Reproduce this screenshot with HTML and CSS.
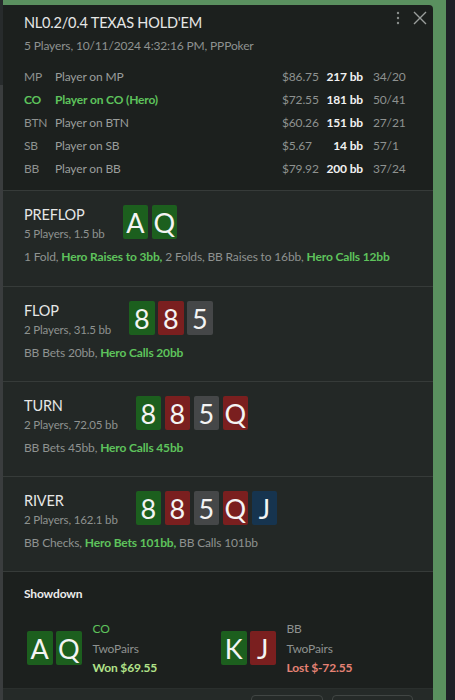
FILE: index.html
```html
<!DOCTYPE html>
<html>
<head>
<meta charset="utf-8">
<link rel="stylesheet" href="styles.css">
</head>
<body>
<div class="edge-left"></div>
<div class="stage">
  <div class="panel">
    <div class="header">
      <div class="title">NL0.2/0.4 TEXAS HOLD'EM</div>
      <div class="subtitle">5 Players, 10/11/2024 4:32:16 PM, PPPoker</div>
      <div class="tools">
        <svg class="dots" width="4" height="14" viewBox="0 0 4 14"><circle cx="2" cy="2" r="1.2"/><circle cx="2" cy="7" r="1.2"/><circle cx="2" cy="12" r="1.2"/></svg>
        <svg class="close" width="14" height="14" viewBox="0 0 14 14"><path d="M1 1 L13 13 M13 1 L1 13"/></svg>
      </div>
      <div class="players">
        <div class="prow"><span class="pos">MP</span><span class="name">Player on MP</span><span class="stack">$86.75</span><span class="bb">217 bb</span><span class="stat">34/20</span></div>
        <div class="prow hero"><span class="pos">CO</span><span class="name">Player on CO (Hero)</span><span class="stack">$72.55</span><span class="bb">181 bb</span><span class="stat">50/41</span></div>
        <div class="prow"><span class="pos">BTN</span><span class="name">Player on BTN</span><span class="stack">$60.26</span><span class="bb">151 bb</span><span class="stat">27/21</span></div>
        <div class="prow"><span class="pos">SB</span><span class="name">Player on SB</span><span class="stack">$5.67</span><span class="bb">14 bb</span><span class="stat">57/1</span></div>
        <div class="prow"><span class="pos">BB</span><span class="name">Player on BB</span><span class="stack">$79.92</span><span class="bb">200 bb</span><span class="stat">37/24</span></div>
      </div>
    </div>

    <div class="street first">
      <div class="street-top">
        <div class="street-info"><div class="street-name">PREFLOP</div><div class="street-sub">5 Players, 1.5 bb</div></div>
        <div class="cards"><span class="card c-green">A</span><span class="card c-green">Q</span></div>
      </div>
      <div class="actions">1 Fold, <b>Hero Raises to 3bb,</b> 2 Folds, BB Raises to 16bb, <b>Hero Calls 12bb</b></div>
    </div>

    <div class="street">
      <div class="street-top">
        <div class="street-info"><div class="street-name">FLOP</div><div class="street-sub">2 Players, 31.5 bb</div></div>
        <div class="cards"><span class="card c-green">8</span><span class="card c-red">8</span><span class="card c-gray">5</span></div>
      </div>
      <div class="actions">BB Bets 20bb, <b>Hero Calls 20bb</b></div>
    </div>

    <div class="street">
      <div class="street-top">
        <div class="street-info"><div class="street-name">TURN</div><div class="street-sub">2 Players, 72.05 bb</div></div>
        <div class="cards"><span class="card c-green">8</span><span class="card c-red">8</span><span class="card c-gray">5</span><span class="card c-red">Q</span></div>
      </div>
      <div class="actions">BB Bets 45bb, <b>Hero Calls 45bb</b></div>
    </div>

    <div class="street">
      <div class="street-top">
        <div class="street-info"><div class="street-name">RIVER</div><div class="street-sub">2 Players, 162.1 bb</div></div>
        <div class="cards"><span class="card c-green">8</span><span class="card c-red">8</span><span class="card c-gray">5</span><span class="card c-red">Q</span><span class="card c-blue">J</span></div>
      </div>
      <div class="actions">BB Checks, <b>Hero Bets 101bb,</b> BB Calls 101bb</div>
    </div>

    <div class="showdown">
      <div class="sd-title">Showdown</div>
      <div class="sd-players">
        <div class="sd-player">
          <div class="cards"><span class="card c-green">A</span><span class="card c-green">Q</span></div>
          <div class="sd-info"><div class="sd-pos hero-pos">CO</div><div class="sd-hand">TwoPairs</div><div class="won">Won $69.55</div></div>
        </div>
        <div class="sd-player">
          <div class="cards"><span class="card c-green">K</span><span class="card c-red">J</span></div>
          <div class="sd-info"><div class="sd-pos">BB</div><div class="sd-hand">TwoPairs</div><div class="lost">Lost $-72.55</div></div>
        </div>
      </div>
    </div>

    <div class="footer">
      <div class="btn btn-a"></div>
      <div class="btn btn-b"></div>
    </div>
  </div>
</div>
<div class="edge-right"></div>
</body>
</html>
```

FILE: styles.css
```css
html, body {
  margin: 0;
  padding: 0;
  height: 700px;
  overflow: hidden;
}
body {
  display: flex;
  font-family: "Lato", "Open Sans", sans-serif;
  letter-spacing: -0.15px;
  background: #1e2027;
}
.edge-left {
  width: 3px;
  flex: none;
  background: linear-gradient(#272b2c 0, #272b2c 85px, #3a3d3e 85px);
}
.stage {
  width: 430px;
  flex: none;
  padding: 5px 13px 0 0;
  background: #5a905f;
}
.edge-right {
  flex: 1;
  background: #1e2027;
}
.panel {
  height: 695px;
  background: #1c201e;
  border-top-right-radius: 4px;
  overflow: hidden;
  display: flex;
  flex-direction: column;
}
.header {
  flex: none;
  position: relative;
  height: 186px;
  padding: 7px 24px 0 21px;
  box-sizing: border-box;
  border-bottom: 1px solid #363b39;
}
.title {
  font-size: 14.5px;
  letter-spacing: -0.2px;
  line-height: 22px;
  color: #e6e7e6;
}
.subtitle {
  margin-top: 3px;
  font-size: 12px;
  line-height: 18px;
  color: #8e9290;
}
.tools {
  position: absolute;
  top: 6px;
  right: 6px;
  display: flex;
  align-items: center;
  gap: 13px;
}
.dots { fill: #8a8e8c; }
.close { stroke: #9a9e9c; stroke-width: 1.4; fill: none; }
.players {
  margin-top: 10px;
}
.prow {
  display: flex;
  height: 23px;
  align-items: center;
  font-size: 12px;
  color: #8e9290;
}
.pos { width: 31px; }
.name { width: 227px; color: #9a9e9c; }
.stack { width: 40px; }
.bb { width: 41px; text-align: right; color: #f2f2f2; font-weight: 700; }
.stat { margin-left: 10px; }
.prow.hero .pos, .prow.hero .name { color: #5ec35c; font-weight: 700; }
.street {
  flex: none;
  height: 95px;
  box-sizing: border-box;
  background: #232826;
  padding: 14px 0 0 21px;
  border-bottom: 1px solid #363b39;
}
.street.first { height: 96px; }
.street-top {
  display: flex;
  align-items: flex-start;
  gap: 18px;
}
.street-name {
  font-size: 14.5px;
  line-height: 20px;
  color: #e6e7e6;
}
.street-sub {
  font-size: 11.5px;
  line-height: 18px;
  color: #8e9290;
}
.cards {
  display: flex;
  gap: 3.5px;
}
.card {
  width: 25.5px;
  height: 34px;
  border-radius: 2px;
  color: #f4f4f4;
  font-size: 27px;
  line-height: 35px;
  letter-spacing: 0;
  text-align: center;
}
.c-green { background: #1c5f1e; }
.c-red { background: #7a1f1f; }
.c-gray { background: #454748; }
.c-blue { background: #16344f; }
.actions {
  margin-top: 5px;
  font-size: 12px;
  line-height: 18px;
  color: #8e9290;
}
.actions b { color: #5ec35c; font-weight: 700; }
.showdown {
  flex: none;
  height: 117px;
  box-sizing: border-box;
  padding: 12px 0 0 21px;
  border-bottom: 1px solid #2a2f2d;
}
.sd-title {
  font-size: 12px;
  font-weight: 700;
  line-height: 20px;
  color: #ececec;
}
.sd-players {
  display: flex;
  margin-top: 15px;
  padding-left: 3px;
}
.sd-player {
  display: flex;
  align-items: center;
  gap: 11px;
  width: 194px;
}
.sd-info {
  font-size: 12px;
  line-height: 19.5px;
}
.sd-pos { color: #8e9290; }
.sd-pos.hero-pos { color: #5ec35c; }
.sd-hand { color: #8e9290; }
.won { color: #b2e38a; font-weight: 700; }
.lost { color: #e58275; font-weight: 700; }
.footer {
  flex: 1;
  background: #252a28;
  display: flex;
  justify-content: flex-end;
  padding: 6px 20px 0 0;
  gap: 9px;
}
.btn {
  height: 30px;
  border: 1px solid #414644;
  border-radius: 4px;
  box-sizing: border-box;
}
.btn-a { width: 72px; }
.btn-b { width: 81px; }
```
